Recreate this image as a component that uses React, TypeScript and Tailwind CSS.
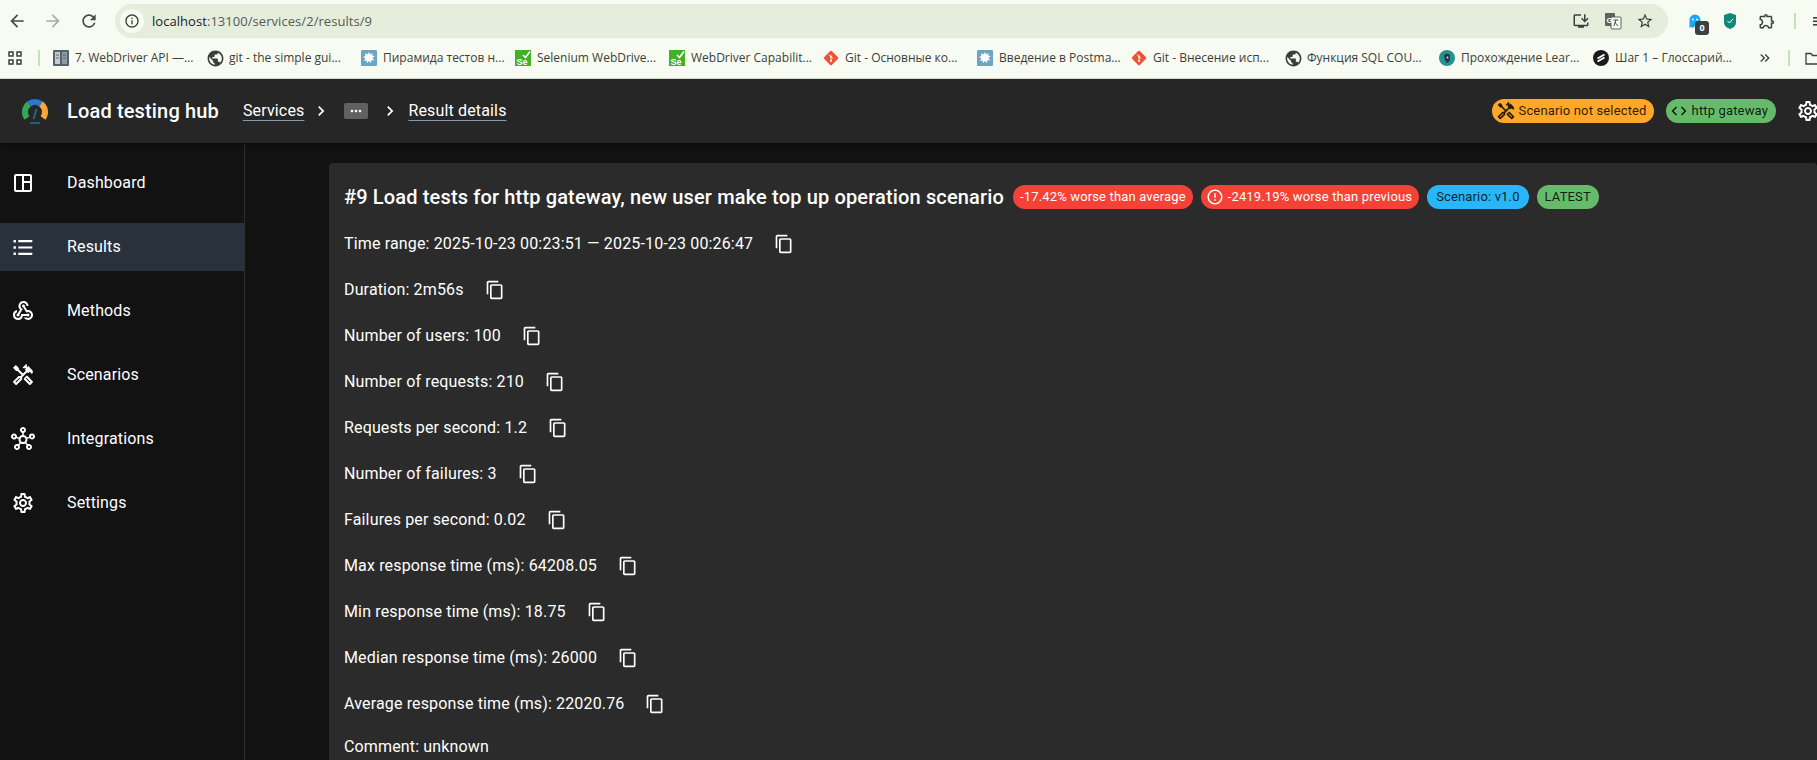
import React from 'react';
import {
  MdArrowBack,
  MdArrowForward,
  MdRefresh,
  MdInfoOutline,
  MdStarBorder,
  MdOutlineInstallDesktop,
  MdOutlineExtension,
  MdOutlineSpaceDashboard,
  MdOutlineWebhook,
  MdOutlineHandyman,
  MdOutlineHub,
  MdOutlineSettings,
  MdContentCopy,
  MdErrorOutline,
  MdCode,
  MdChevronRight,
  MdMoreHoriz,
  MdPublic,
  MdKeyboardDoubleArrowRight,
} from 'react-icons/md';

const GitIcon = () => (
  <svg width="16" height="16" viewBox="0 0 16 16" className="shrink-0">
    <rect x="2.5" y="2.5" width="11" height="11" rx="1.5" transform="rotate(45 8 8)" fill="#f05033" />
    <path d="M6 4.5 10 8.5M8 6.5v5" stroke="#fff" strokeWidth="1" />
    <circle cx="8" cy="6.5" r="1" fill="#fff" />
    <circle cx="8" cy="11" r="1" fill="#fff" />
  </svg>
);

const SeleniumIcon = () => (
  <svg width="16" height="16" viewBox="0 0 16 16" className="shrink-0">
    <rect width="16" height="16" fill="#43b02a" />
    <path d="M8 5 10.5 7.5 15 1.5" stroke="#fff" strokeWidth="1.6" fill="none" />
    <text x="1.5" y="14.5" fontSize="9" fontWeight="700" fill="#fff" fontFamily="Liberation Sans, sans-serif">
      Se
    </text>
  </svg>
);

const SplatIcon = () => (
  <svg width="16" height="16" viewBox="0 0 16 16" className="shrink-0">
    <rect width="16" height="16" rx="1" fill="#6ba4c4" />
    <path d="M8 2 9 4.5 11.5 3 11 5.5 14 6 11.5 8 13.5 10.5 10.5 10 10 13 8 11 6 13 5.5 10.5 3 11 4.5 8.5 2 7 4.5 6 4 3 6.5 4.5Z" fill="#fff" />
  </svg>
);

const BooksIcon = () => (
  <svg width="16" height="16" viewBox="0 0 16 16" className="shrink-0">
    <rect width="16" height="16" rx="1" fill="#54646f" />
    <rect x="2" y="2" width="5" height="12" fill="#c3ccd2" />
    <rect x="9" y="2" width="5" height="12" fill="#8d9ba5" />
    <path d="M3 5h3M3 8h3M10 5h3M10 8h3" stroke="#54646f" strokeWidth="1" />
  </svg>
);

const FaceIcon = () => (
  <svg width="16" height="16" viewBox="0 0 16 16" className="shrink-0">
    <circle cx="8" cy="8" r="8" fill="#26928f" />
    <path d="M5 5.5C6 3 10.5 3 11 6L10.5 11 8 13 6 10Z" fill="#23343c" />
    <circle cx="8.5" cy="7.5" r="1" fill="#d9e3e3" />
  </svg>
);

const StepikIcon = () => (
  <svg width="16" height="16" viewBox="0 0 16 16" className="shrink-0">
    <circle cx="8" cy="8" r="8" fill="#1b1b1b" />
    <path d="M11.5 4.5 4.5 8.5M11.5 7.5 4.5 11.5" stroke="#fff" strokeWidth="1.8" />
  </svg>
);

const GlobeIcon = () => (
  <span className="w-4 h-4 shrink-0 flex items-center justify-center text-[#3b3f3b]">
    <MdPublic size={19} className="shrink-0" />
  </span>
);

// MUI-style bulleted list with the small square dots of the reference
const ListIcon = ({ size = 24, className }: { size?: number; className?: string }) => (
  <svg width={size} height={size} viewBox="0 0 24 24" fill="currentColor" className={className}>
    <path d="M2.5 5h2.4v2.4H2.5zM2.5 11.3h2.4v2.4H2.5zM2.5 17.6h2.4V20H2.5zM7.3 5.1h14v2.2h-14zM7.3 11.4h14v2.2h-14zM7.3 17.7h14v2.2h-14z" />
  </svg>
);

const TranslateIcon = () => (
  <svg width="18" height="18" viewBox="0 0 18 18">
    <rect x="1" y="1" width="10" height="13" rx="1" fill="#5f635d" />
    <rect x="7" y="5" width="10" height="12" rx="1" fill="#f7fbf1" stroke="#5f635d" strokeWidth="1" />
    <path d="M9.5 8h5M12 8l-2 6M10.5 10l3.5 4" stroke="#3c403b" strokeWidth="0.9" fill="none" />
    <text x="2.5" y="10.5" fontSize="8" fontWeight="700" fill="#fff" fontFamily="Liberation Sans, sans-serif">
      G
    </text>
  </svg>
);

const bookmarks = [
  { icon: <BooksIcon />, label: '7. WebDriver API —...' },
  { icon: <GlobeIcon />, label: 'git - the simple gui...' },
  { icon: <SplatIcon />, label: 'Пирамида тестов н...' },
  { icon: <SeleniumIcon />, label: 'Selenium WebDrive...' },
  { icon: <SeleniumIcon />, label: 'WebDriver Capabilit...' },
  { icon: <GitIcon />, label: 'Git - Основные ко...' },
  { icon: <SplatIcon />, label: 'Введение в Postma...' },
  { icon: <GitIcon />, label: 'Git - Внесение исп...' },
  { icon: <GlobeIcon />, label: 'Функция SQL COU...' },
  { icon: <FaceIcon />, label: 'Прохождение Lear...' },
  { icon: <StepikIcon />, label: 'Шаг 1 – Глоссарий...' },
];

const navItems = [
  { label: 'Dashboard', icon: MdOutlineSpaceDashboard },
  { label: 'Results', icon: ListIcon, active: true },
  { label: 'Methods', icon: MdOutlineWebhook },
  { label: 'Scenarios', icon: MdOutlineHandyman },
  { label: 'Integrations', icon: MdOutlineHub },
  { label: 'Settings', icon: MdOutlineSettings },
];

const details = [
  'Time range: 2025-10-23 00:23:51 — 2025-10-23 00:26:47',
  'Duration: 2m56s',
  'Number of users: 100',
  'Number of requests: 210',
  'Requests per second: 1.2',
  'Number of failures: 3',
  'Failures per second: 0.02',
  'Max response time (ms): 64208.05',
  'Min response time (ms): 18.75',
  'Median response time (ms): 26000',
  'Average response time (ms): 22020.76',
];

const BrowserChrome = () => (
  <div className="h-[79px] shrink-0 bg-[#f7fbf1] border-b border-[#dfe3da] font-['Open_Sans',sans-serif] text-[#3c403b] overflow-hidden">
    <div className="h-[38px] pt-1 flex">
      <div className="w-[115px] shrink-0 flex items-center pl-[7px] gap-[16px] text-[#474a45]">
        <MdArrowBack size={20} />
        <MdArrowForward size={20} className="text-[#a9ada6]" />
        <MdRefresh size={20} />
      </div>
      <div className="w-[1553px] shrink-0 h-[34px] rounded-full bg-[#e5eddd] flex items-center pl-[5px] pr-[14px]">
        <span className="w-6 h-6 rounded-full bg-[#f7fbf1] flex items-center justify-center">
          <MdInfoOutline size={16} />
        </span>
        <span className="ml-2 text-[13px] leading-none tracking-[0.05px]">
          <span className="text-[#20231f]">localhost</span>
          <span className="text-[#565a54]">:13100/services/2/results/9</span>
        </span>
        <div className="ml-auto flex items-center gap-[14px] text-[#3c403b]">
          <MdOutlineInstallDesktop size={18} />
          <TranslateIcon />
          <MdStarBorder size={18} />
        </div>
      </div>
      <div className="flex-1 flex items-center text-[#35463a]">
        <span className="relative w-[20px] h-[21px] ml-[21px] mt-[7px] shrink-0">
          <svg width="12" height="15" viewBox="0 0 12 15" className="absolute left-0 top-0">
            <path d="M0.5 14V6a5.5 5.5 0 0 1 11 0v8l-2-1.5-2 1.5-2-1.5-2 1.5-1.5-1Z" fill="#1fa6f2" />
            <circle cx="4" cy="5.5" r="1" fill="#fff" />
            <circle cx="8" cy="5.5" r="1" fill="#fff" />
          </svg>
          <span className="absolute left-[6px] top-[7px] w-[14px] h-[14px] rounded-[3px] bg-[#3c4043] text-white text-[9px] leading-[14px] font-bold text-center">0</span>
        </span>
        <svg width="14" height="18" viewBox="0 0 14 18" className="ml-[14px] shrink-0">
          <path d="M7 1 13 3V10C13 14 10 16 7 17 4 16 1 14 1 10V3Z" fill="#0f8a78" />
          <path d="M4.5 9 6.5 11 10 7" stroke="#fff" strokeWidth="1" fill="none" />
        </svg>
        <MdOutlineExtension size={18} className="ml-[21px] shrink-0" />
        <span className="w-[2px] h-4 bg-[#bfe6b4] ml-[18px] shrink-0" />
        <svg width="6" height="9" viewBox="0 0 6 9" className="ml-[17px] shrink-0" fill="#3c403b">
          <rect width="6" height="1.6" />
          <rect y="3.5" width="6" height="1.6" />
          <rect y="7" width="6" height="1.6" />
        </svg>
      </div>
    </div>
    <div className="h-[40px] flex items-center">
      <svg width="14" height="14" viewBox="0 0 14 14" className="ml-2 shrink-0" fill="none" stroke="#3c403b" strokeWidth="1.5">
        <rect x="1" y="1" width="4" height="4" />
        <rect x="9" y="1" width="4" height="4" />
        <rect x="1" y="9" width="4" height="4" />
        <rect x="9" y="9" width="4" height="4" />
      </svg>
      <span className="w-[2px] h-4 ml-4 mr-[13px] bg-[#bfe6b4] shrink-0" />
      {bookmarks.map((b) => (
        <div key={b.label} className="w-[154px] shrink-0 flex items-center gap-[6px] text-[12px] whitespace-nowrap overflow-hidden">
          {b.icon}
          <span>{b.label}</span>
        </div>
      ))}
      <MdKeyboardDoubleArrowRight size={16} className="ml-[10px] shrink-0" />
      <span className="w-[2px] h-4 ml-[15px] bg-[#bfe6b4] shrink-0" />
      <svg width="16" height="13" viewBox="0 0 16 13" className="ml-[15px] shrink-0" fill="none" stroke="#3c403b" strokeWidth="1.3">
        <path d="M1 12V1.5h5l1.5 2H15V12Z" />
      </svg>
    </div>
  </div>
);

const Chip = ({ className, children }: { className: string; children: React.ReactNode }) => (
  <span className={`inline-flex items-center h-6 rounded-full text-[13px] tracking-[0.15px] whitespace-nowrap ${className}`}>{children}</span>
);

const Header = () => (
  <header className="h-[64px] shrink-0 bg-[#262626] flex items-center text-white tracking-[0.15px] shadow-[0_2px_4px_rgba(0,0,0,0.4)] relative z-10 overflow-hidden">
    <svg width="28" height="28" viewBox="0 0 28 28" className="ml-[21px] shrink-0" fill="none" strokeWidth="6">
      <path d="M6 21A10 10 0 0 1 8 7" stroke="#34a853" />
      <path d="M8 7A10 10 0 0 1 20 7" stroke="#2a78d6" />
      <path d="M20 7A10 10 0 0 1 22 21" stroke="#f5a63c" />
      <path d="M12.5 22 15.5 12" stroke="#1f6a86" strokeWidth="2" />
      <rect x="9" y="25" width="10" height="2" fill="#1f5f7a" stroke="none" />
    </svg>
    <span className="ml-[18px] text-[20px] font-medium">Load testing hub</span>
    <span className="ml-6 underline underline-offset-4 decoration-[#8a99ad]">Services</span>
    <MdChevronRight size={20} className="ml-[7px] shrink-0" />
    <span className="ml-[13px] w-[24px] h-[16px] rounded-[2px] bg-[#616161] flex items-center justify-center">
      <MdMoreHoriz size={16} />
    </span>
    <MdChevronRight size={20} className="ml-[12px] shrink-0" />
    <span className="ml-2 underline underline-offset-4 decoration-[#8a99ad]">Result details</span>
    <div className="ml-auto flex items-center">
      <Chip className="bg-[#ffa726] text-black/85 pl-1 pr-[7px] gap-[3px]">
        <MdOutlineHandyman size={20} />
        Scenario not selected
      </Chip>
      <Chip className="ml-[12px] bg-[#66bb6a] text-black/85 pl-1 pr-2 gap-1">
        <MdCode size={18} />
        http gateway
      </Chip>
      <MdOutlineSettings size={24} className="ml-[20px] mr-[-3px] shrink-0" />
    </div>
  </header>
);

const Sidebar = () => (
  <aside className="w-[245px] shrink-0 bg-[#121212] border-r border-[#2e2e2e] pt-4 text-white tracking-[0.15px]">
    {navItems.map(({ label, icon: Icon, active }) => (
      <div key={label} className="h-[64px] flex items-start">
        <div className={`w-full h-[48px] flex items-center pl-[11px] ${active ? 'bg-[#29323c]' : ''}`}>
          <Icon size={24} className="shrink-0" />
          <span className="ml-[32px]">{label}</span>
        </div>
      </div>
    ))}
  </aside>
);

const ResultCard = () => (
  <div className="bg-[#2b2b2b] rounded-t-[4px] min-h-[700px] pl-[15px] pt-[17px] text-white tracking-[0.15px]">
    <div className="h-[34px] flex items-center">
      <h1 className="text-[20px] font-medium whitespace-nowrap">
        #9 Load tests for http gateway, new user make top up operation scenario
      </h1>
      <div className="ml-[9px] flex items-center gap-2">
        <Chip className="bg-[#f44336] px-[7px]">-17.42% worse than average</Chip>
        <Chip className="bg-[#f44336] pl-[5px] pr-[7px] gap-1">
          <MdErrorOutline size={18} />
          -2419.19% worse than previous
        </Chip>
        <Chip className="bg-[#29b6f6] text-black/85 px-[9px]">Scenario: v1.0</Chip>
        <Chip className="bg-[#66bb6a] text-black/85 px-2">LATEST</Chip>
      </div>
    </div>
    <div className="mt-[7px]">
      {details.map((row) => (
        <div key={row} className="h-[46px] flex items-center">
          <span>{row}</span>
          <MdContentCopy size={20} className="ml-[21px]" />
        </div>
      ))}
      <div className="h-[40px] flex items-center">Comment: unknown</div>
    </div>
  </div>
);

export default function App() {
  return (
    <div className="h-screen overflow-hidden flex flex-col bg-[#121212] font-['Roboto',sans-serif]">
      <BrowserChrome />
      <Header />
      <div className="flex-1 flex min-h-0">
        <Sidebar />
        <main className="flex-1 pl-[84px] pt-5 min-w-0">
          <ResultCard />
        </main>
      </div>
    </div>
  );
}
